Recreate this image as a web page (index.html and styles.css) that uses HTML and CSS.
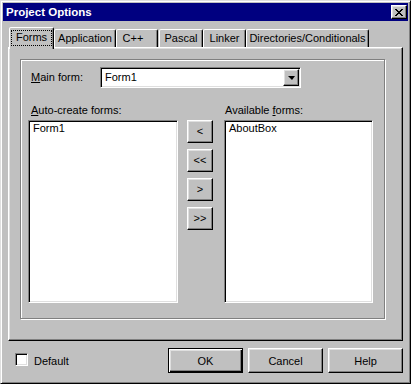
FILE: index.html
```html
<!DOCTYPE html>
<html lang="en">
<head>
    <meta charset="UTF-8">
    <title>Project Options</title>
    <link rel="stylesheet" href="styles.css">
</head>
<body>
    <div class="window">
        <div class="titlebar">
            <span class="title">Project Options</span>
            <button class="raised close" title="Close">
                <svg width="8" height="7" viewBox="0 0 8 7" shape-rendering="crispEdges">
                    <path d="M0 0h2v1H0zM6 0h2v1H6zM1 1h2v1H1zM5 1h2v1H5zM2 2h4v1H2zM3 3h2v1H3zM2 4h4v1H2zM1 5h2v1H1zM5 5h2v1H5zM0 6h2v1H0zM6 6h2v1H6z" fill="#000"/>
                </svg>
            </button>
        </div>

        <div class="tabs">
            <div class="tab active tab-forms"><span class="focus">Forms</span></div>
            <div class="tab tab-app">Application</div>
            <div class="tab tab-cpp">C++</div>
            <div class="tab tab-pascal">Pascal</div>
            <div class="tab tab-linker">Linker</div>
            <div class="tab tab-dirs">Directories/Conditionals</div>
        </div>

        <div class="panel">
            <div class="group">
                <div class="main-row">
                    <label class="main-label"><u>M</u>ain form:</label>
                    <div class="combo sunken">
                        <span class="combo-text">Form1</span>
                        <span class="raised drop"><span class="arrow"></span></span>
                    </div>
                </div>

                <div class="lists">
                    <div class="col col-left">
                        <label class="list-label"><u>A</u>uto-create forms:</label>
                        <div class="listbox sunken">
                            <div class="item">Form1</div>
                        </div>
                    </div>
                    <div class="movers">
                        <button class="raised mover">&lt;</button>
                        <button class="raised mover">&lt;&lt;</button>
                        <button class="raised mover">&gt;</button>
                        <button class="raised mover">&gt;&gt;</button>
                    </div>
                    <div class="col col-right">
                        <label class="list-label">Available <u>f</u>orms:</label>
                        <div class="listbox sunken">
                            <div class="item">AboutBox</div>
                        </div>
                    </div>
                </div>
            </div>
        </div>

        <div class="footer">
            <div class="check-wrap">
                <span class="checkbox sunken"></span>
                <span class="check-label">Default</span>
            </div>
            <div class="buttons">
                <button class="raised push default">OK</button>
                <button class="raised push">Cancel</button>
                <button class="raised push">Help</button>
            </div>
        </div>
    </div>
</body>
</html>
```

FILE: styles.css
```css
* {
    box-sizing: border-box;
}
body {
    margin: 0;
    background-color: #c0c0c0;
    font-family: "Liberation Sans", Arial, sans-serif;
    font-size: 11px;
    color: #000;
}
button {
    font: inherit;
    color: #000;
    padding: 0;
    margin: 0;
}
.window {
    width: 411px;
    height: 384px;
    padding: 2px;
    background-color: #c0c0c0;
    border: 1px solid;
    border-color: #dfdfdf #000 #000 #dfdfdf;
    box-shadow: inset 1px 1px #fff, inset -1px -1px #808080;
}

/* 3D borders */
.raised {
    background-color: #c0c0c0;
    border: 1px solid;
    border-color: #fff #000 #000 #fff;
    box-shadow: inset -1px -1px #808080, inset 1px 1px #dfdfdf;
}
.sunken {
    background-color: #fff;
    border: 1px solid;
    border-color: #808080 #fff #fff #808080;
    box-shadow: inset 1px 1px #000, inset -1px -1px #dfdfdf;
}

/* title bar */
.titlebar {
    height: 18px;
    background-color: #000080;
    color: #fff;
    display: flex;
    align-items: center;
    justify-content: space-between;
    padding: 0 1px 0 3px;
}
.title {
    font-weight: bold;
    font-size: 11.5px;
    line-height: 18px;
}
.close {
    width: 16px;
    height: 14px;
    display: flex;
    align-items: center;
    justify-content: center;
}
.close svg {
    display: block;
    margin-left: -1px;
}

/* tabs */
.tabs {
    height: 26px;
    display: flex;
    align-items: flex-end;
    padding-left: 6px;
}
.tab {
    height: 18px;
    line-height: 16px;
    text-align: center;
    background-color: #c0c0c0;
    border: 1px solid;
    border-bottom: 0;
    border-color: #fff #000 transparent #fff;
    border-radius: 2px 2px 0 0;
    box-shadow: inset -1px 0 #808080;
    white-space: nowrap;
}
.tab.active {
    height: 22px;
    margin-bottom: -2px;
    position: relative;
    z-index: 1;
}
.focus {
    display: block;
    margin: 2px 1px 0 1px;
    border: 1px dotted #000;
    line-height: 13px;
    padding-bottom: 1px;
}
.tab-forms { width: 45px; }
.tab-app { width: 62px; }
.tab-cpp { width: 42px; padding-right: 8px; }
.tab-pascal { width: 44px; margin-left: 1px; }
.tab-linker { width: 43px; }
.tab-dirs { width: 123px; }

/* page */
.panel {
    margin: 0 5px;
    height: 294px;
    padding: 11px 0 0 11px;
    border: 1px solid;
    border-color: #fff #000 #000 #fff;
    box-shadow: inset -1px -1px #808080, inset 1px 1px #dfdfdf;
}
.group {
    width: 365px;
    height: 260px;
    padding: 7px 0 0 7px;
    border: 1px solid #808080;
    box-shadow: inset 1px 1px #fff, 1px 1px #fff;
}
.main-row {
    display: flex;
    align-items: center;
    height: 21px;
}
.main-label {
    width: 72px;
    padding-left: 3px;
    line-height: 21px;
}
.combo {
    width: 201px;
    height: 21px;
    display: flex;
    padding: 1px;
}
.combo-text {
    flex: 1;
    padding-left: 3px;
    line-height: 17px;
}
.drop {
    width: 16px;
    height: 17px;
    display: flex;
    align-items: center;
    justify-content: center;
}
.arrow {
    width: 0;
    height: 0;
    border-left: 4px solid transparent;
    border-right: 3px solid transparent;
    border-top: 4px solid #000;
    margin-top: 1px;
}

.lists {
    display: flex;
    align-items: flex-start;
    margin-top: 15px;
}
.list-label {
    display: block;
    line-height: 14px;
    margin-bottom: 3px;
}
.col-left { width: 150px; }
.col-left .list-label { padding-left: 3px; }
.col-right { width: 149px; margin-left: 11px; }
.col-right .list-label { padding-left: 1px; }
.listbox {
    height: 183px;
    padding: 2px 2px 2px 4px;
}
.item {
    line-height: 11px;
}
.movers {
    width: 26px;
    margin-left: 9px;
    padding-top: 17px;
    display: flex;
    flex-direction: column;
    gap: 6px;
}
.mover {
    height: 23px;
    width: 26px;
    line-height: 19px;
}

/* footer */
.footer {
    display: flex;
    align-items: flex-start;
    padding: 7px 5px 0 12px;
}
.check-wrap {
    height: 25px;
    display: flex;
    align-items: center;
}
.checkbox {
    width: 13px;
    height: 13px;
    margin-bottom: 2px;
}
.check-label {
    margin-left: 6px;
}
.buttons {
    margin-left: auto;
    display: flex;
    gap: 5px;
}
.push {
    width: 75px;
    height: 25px;
}
.push.default {
    border: 1px solid #000;
    box-shadow: inset 1px 1px #fff, inset -1px -1px #000, inset -2px -2px #808080, inset 2px 2px #dfdfdf;
}
```
